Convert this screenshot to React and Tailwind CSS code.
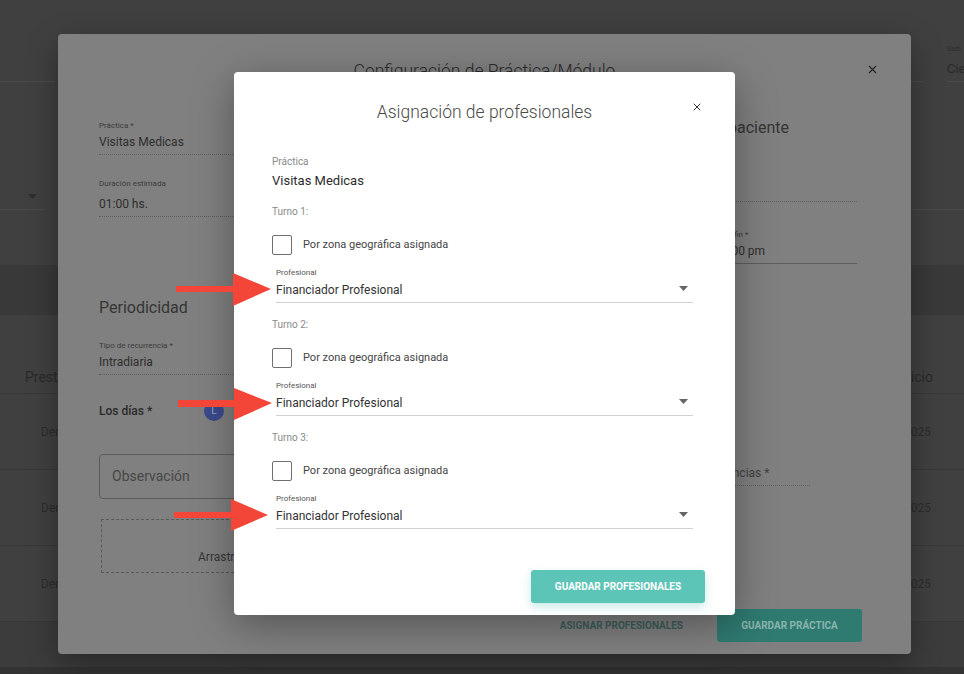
import { X } from "lucide-react";

function Caret({ className = "" }) {
  return (
    <svg width="9" height="5" viewBox="0 0 9 5" className={className}>
      <path d="M0 0h9L4.5 5z" fill="currentColor" />
    </svg>
  );
}

function TurnoBlock({ n, className = "" }) {
  return (
    <div className={className}>
      <div className="text-[10px] leading-[12px] text-[#8a8a8a]">Turno {n}:</div>
      <label className="mt-[17px] flex items-center h-[20px]">
        <span className="w-[20px] h-[20px] border-[1.5px] border-[#6f6f6f] rounded-[2px]" />
        <span className="ml-[11px] text-[11px] leading-[14px] text-[#444]">
          Por zona geográfica asignada
        </span>
      </label>
      <div className="ml-[4px] mt-[13px]">
        <div className="text-[8px] leading-[10px] text-[#555]">Profesional</div>
        <div className="mt-[4px] flex items-center justify-between pb-[4px] border-b border-[#d2d2d2]">
          <span className="text-[12px] leading-[16px] text-[#333]">Financiador Profesional</span>
          <Caret className="mr-[5px] -mt-[4px] text-[#666]" />
        </div>
      </div>
    </div>
  );
}

function DimField({ label, value, border = "border-dotted", gap = "mt-[3px]", className = "" }) {
  return (
    <div className={className}>
      <div className="text-[8px] leading-[10px] text-[#3c3c3c] whitespace-nowrap">{label}</div>
      <div
        className={`${gap} pb-[4px] border-b ${border} border-[#5e5e5e] text-[12px] leading-[16px] text-[#2e2e2e] whitespace-nowrap`}
      >
        {value}
      </div>
    </div>
  );
}

function BackgroundPage() {
  const rows = ["Demo prestación 1", "Demo prestación 2", "Demo prestación 3"];
  return (
    <div className="absolute inset-0 flex flex-col bg-[#404040]">
      {/* filtros */}
      <div className="h-[82px] flex items-end shrink-0">
        <div className="w-[55px] border-b border-[#4a4a4a]" />
        <div className="flex-1" />
        <div className="w-[60px] border-b border-[#4a4a4a]" />
        <div className="ml-[24px] w-[17px] pb-[4px] border-b border-[#4a4a4a] whitespace-nowrap">
          <div className="text-[8px] leading-[10px] text-[#2e2e2e]">Sub</div>
          <div className="mt-[7px] text-[13px] leading-[16px] text-[#2a2a2a]">Cie</div>
        </div>
      </div>
      <div className="h-[128px] flex items-end shrink-0">
        <div className="w-[43px] pb-[10px] border-b border-[#4a4a4a] flex justify-end">
          <Caret className="mr-[6px] text-[#2e2e2e]" />
        </div>
        <div className="flex-1" />
        <div className="w-[52px] border-b border-[#4a4a4a]" />
      </div>
      <div className="h-[55px] shrink-0" />
      <div className="h-[50px] bg-[#393939] shrink-0" />
      {/* tabla */}
      <div className="h-[79px] flex items-end justify-between pb-[7px] border-b border-[#383838] text-[14px] leading-[18px] text-[#2a2a2a] shrink-0">
        <span className="pl-[25px]">Prestación</span>
        <span className="pr-[31px]">Fecha inicio</span>
      </div>
      {rows.map((r) => (
        <div
          key={r}
          className="h-[76px] flex items-center justify-between border-b border-[#383838] text-[12px] text-[#2c2c2c] shrink-0"
        >
          <span className="pl-[41px]">{r}</span>
          <span className="pr-[33px]">01/02/2025</span>
        </div>
      ))}
      <div className="h-[45px] bg-[#3c3c3c] shrink-0" />
      <div className="flex-1 bg-[#333]" />
    </div>
  );
}

function ConfigModal() {
  return (
    <div className="absolute left-[58px] top-[34px] w-[853px] h-[620px] bg-[#808080] rounded-[4px] shadow-[0_10px_30px_rgba(0,0,0,0.35)] flex flex-col">
      <div className="relative pt-[25px] text-center text-[17.5px] leading-[24px] font-light text-[#2a2a2a]">
        Configuración de Práctica/Módulo
        <X size={13} strokeWidth={2} className="absolute right-[32px] top-[29px] text-[#222]" />
      </div>

      <div className="flex-1 flex justify-between pl-[41px] pr-[54px] pt-[38px]">
        {/* columna izquierda */}
        <div className="w-[370px]">
          <DimField label="Práctica *" value="Visitas Medicas" />
          <DimField className="mt-[24px]" gap="mt-[7px]" label="Duración estimada" value="01:00 hs." />
          <div className="mt-[81px] text-[16px] leading-[20px] text-[#353535]">Periodicidad</div>
          <DimField className="mt-[23px]" label="Tipo de recurrencia *" value="Intradiaria" />
          <div className="mt-[26px] flex items-center h-[20px]">
            <span className="w-[105px] text-[12px] font-medium text-[#2a2a2a]">Los días *</span>
            <span className="w-[20px] h-[20px] rounded-full bg-[#3c4a8c] text-[10px] leading-[20px] text-center text-[#9aa3c7]">
              L
            </span>
          </div>
          <div className="mt-[33px] h-[45px] border border-[#5c5c5c] rounded-[4px] flex items-center pl-[12px] text-[14px] text-[#474747]">
            Observación
          </div>
          <div className="mt-[20px] ml-[2px] h-[54px] border border-dashed border-[#5a5a5a] flex items-end pl-[96px] pb-[7px] text-[12px] leading-[16px] text-[#363636]">
            Arrastrá los archivos aquí
          </div>
        </div>

        {/* columna derecha */}
        <div className="w-[200px]">
          <div className="mt-[-3px] text-[16px] leading-[20px] text-[#353535] whitespace-nowrap">
            Datos del paciente
          </div>
          <DimField className="mt-[30px] w-[200px]" label="Domicilio" value={"\u00a0"} />
          <div className="mt-[28px] flex gap-[15px]">
            <DimField className="w-[43px]" border="border-solid" label="Inicio *" value="07" />
            <DimField className="w-[142px]" border="border-solid" label="Hora fin *" value="08:00 pm" />
          </div>
          <div className="mt-[201px] w-[153px] pb-[4px] border-b border-dotted border-[#5e5e5e] text-[12px] leading-[16px] text-[#404040] whitespace-nowrap">
            Nro. de ocurrencias *
          </div>
        </div>
      </div>

      <div className="flex justify-end items-center gap-[34px] pr-[49px] pb-[12px]">
        <span className="text-[10px] font-bold text-[#3d5e5a]">ASIGNAR PROFESIONALES</span>
        <button className="w-[145px] h-[33px] rounded-[3px] bg-[#2f7a71] text-[10px] font-bold text-[#8ab5ae]">
          GUARDAR PRÁCTICA
        </button>
      </div>
    </div>
  );
}

function AsignacionModal() {
  return (
    <div className="absolute left-[234px] top-[72px] w-[501px] h-[543px] bg-white rounded-[4px] shadow-[0_10px_40px_rgba(0,0,0,0.35)] flex flex-col">
      <div className="relative pt-[28px] text-center text-[17.5px] leading-[24px] font-light text-[#4a4a4a]">
        Asignación de profesionales
        <X size={12} strokeWidth={2} className="absolute right-[32px] top-[29px] text-[#333]" />
      </div>

      <div className="pl-[38px] pr-[42px]">
        <div className="mt-[32px] text-[10px] leading-[12px] text-[#8a8a8a]">Práctica</div>
        <div className="mt-[5px] text-[13px] leading-[16px] text-[#2b2b2b]">Visitas Medicas</div>
        <TurnoBlock n={1} className="mt-[17px]" />
        <TurnoBlock n={2} className="mt-[16px]" />
        <TurnoBlock n={3} className="mt-[16px]" />
      </div>

      <div className="flex-1 flex items-end justify-end pr-[30px] pb-[12px]">
        <button className="w-[174px] h-[33px] rounded-[3px] bg-[#5dc4b8] text-[10px] font-bold text-white shadow-[0_4px_10px_rgba(93,196,184,0.35)]">
          GUARDAR PROFESIONALES
        </button>
      </div>
    </div>
  );
}

function Arrows() {
  return (
    <svg
      className="absolute inset-0 pointer-events-none"
      width="964"
      height="674"
      viewBox="0 0 964 674"
    >
      <g fill="#f34538">
        <rect x="176" y="286" width="60" height="6" />
        <path d="M233 273L271 289L233 306z" />
        <rect x="178" y="400" width="58" height="7" />
        <path d="M234 388L272 403L234 420z" />
        <rect x="174" y="512" width="59" height="6" />
        <path d="M231 499L268 515L231 531z" />
      </g>
    </svg>
  );
}

export default function App() {
  return (
    <div className="relative w-[964px] h-[674px] overflow-hidden font-['Roboto',sans-serif]">
      <BackgroundPage />
      <ConfigModal />
      <AsignacionModal />
      <Arrows />
    </div>
  );
}
